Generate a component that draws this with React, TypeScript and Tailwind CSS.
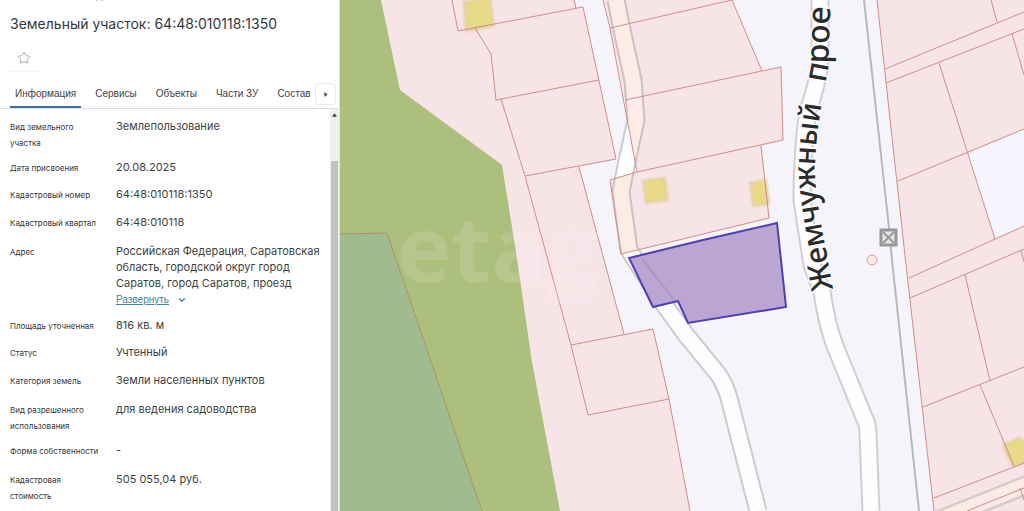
import React, { useState } from "react";
import { ChevronDown, Star } from "lucide-react";

interface Field {
  label: string;
  value: string;
  height: string;
  expandable?: boolean;
}

const TABS = ["Информация", "Сервисы", "Объекты", "Части ЗУ", "Состав"];

const FIELDS: Field[] = [
  { label: "Вид земельного участка", value: "Землепользование", height: "min-h-[41px]" },
  { label: "Дата присвоения", value: "20.08.2025", height: "min-h-[27px]" },
  { label: "Кадастровый номер", value: "64:48:010118:1350", height: "min-h-[28px]" },
  { label: "Кадастровый квартал", value: "64:48:010118", height: "min-h-[29px]" },
  {
    label: "Адрес",
    value:
      "Российская Федерация, Саратовская область, городской округ город Саратов, город Саратов, проезд",
    height: "min-h-[74px]",
    expandable: true,
  },
  { label: "Площадь уточненная", value: "816 кв. м", height: "min-h-[27px]" },
  { label: "Статус", value: "Учтенный", height: "min-h-[28px]" },
  { label: "Категория земель", value: "Земли населенных пунктов", height: "min-h-[29px]" },
  {
    label: "Вид разрешенного использования",
    value: "для ведения садоводства",
    height: "min-h-[41px]",
  },
  { label: "Форма собственности", value: "-", height: "min-h-[29px]" },
  { label: "Кадастровая стоимость", value: "505 055,04 руб.", height: "min-h-[41px]" },
];

const InfoPanel: React.FC = () => {
  const [activeTab, setActiveTab] = useState(TABS[0]);
  const [favorite, setFavorite] = useState(false);

  return (
    <aside className="flex w-[340px] shrink-0 flex-col overflow-hidden border-r border-[#e4e8c9] bg-white font-['Inter',sans-serif] text-[#3b3f45]">
      <header className="px-[10px]">
        <div className="flex h-[2px] items-end pl-[16px] text-[11px] leading-[14px] text-[#888]">
          <span>Объекты найдены</span>
        </div>
        <h1 className="mt-[14px] text-[14px] leading-4 font-normal text-[#35383c]">
          Земельный участок: 64:48:010118:1350
        </h1>
        <button
          type="button"
          aria-label="В избранное"
          aria-pressed={favorite}
          onClick={() => setFavorite(!favorite)}
          className="mt-3 flex h-7 w-7 items-center justify-center border-b border-gray-100 text-gray-400"
        >
          <Star className="h-[14px] w-[14px]" strokeWidth={1.5} />
        </button>
      </header>

      {/* Tabs */}
      <div className="mt-2 flex h-[29px] shrink-0 items-stretch border-b border-[#dcdfe8] pl-[10px]">
        <div
          role="tablist"
          className="flex min-w-0 flex-1 gap-[9px] overflow-hidden font-['Liberation_Sans',sans-serif] text-[10px]"
        >
          {TABS.map((tab) => (
            <button
              key={tab}
              type="button"
              role="tab"
              aria-selected={tab === activeTab}
              onClick={() => setActiveTab(tab)}
              className={`shrink-0 border-b-2 pl-[5px] last:pr-0 pr-[5px] ${
                tab === activeTab ? "border-[#3f7094]" : "border-transparent"
              }`}
            >
              {tab}
            </button>
          ))}
        </div>
        <button
          type="button"
          aria-label="Следующие вкладки"
          className="mr-[3px] flex h-[22px] w-[21px] shrink-0 items-center justify-center self-center rounded-sm border border-gray-200"
        >
          <svg viewBox="0 0 4 6" className="h-[5px] w-1 fill-gray-600">
            <path d="M0 0 4 3 0 6z" />
          </svg>
        </button>
      </div>

      <div className="flex min-h-0 flex-1">
        <dl className="min-w-0 flex-1 overflow-hidden pt-[9px] pl-[10px]">
          {FIELDS.map((field) => (
            <div key={field.label} className={`flex ${field.height}`}>
              <dt className="w-[106px] shrink-0 pt-px pr-3 text-[8px] leading-[16px] text-[#33363b]">
                {field.label}
              </dt>
              <dd className="flex-1 text-[11px] leading-[16px]">
                {field.value}
                {field.expandable && (
                  <a
                    href="#address"
                    className="flex items-center gap-2 font-['Liberation_Sans',sans-serif] text-[10px] leading-[18px] text-[#3f8299]"
                  >
                    <span className="underline">Развернуть</span>
                    <ChevronDown className="h-[10px] w-[10px]" strokeWidth={3} />
                  </a>
                )}
              </dd>
            </div>
          ))}
        </dl>
        <div className="flex w-[9px] shrink-0 flex-col items-center bg-[#f0f0f1]">
          <svg viewBox="0 0 6 4" className="mt-1 h-1 w-[5px] shrink-0 fill-gray-700">
            <path d="M0 4 3 0 6 4z" />
          </svg>
          <div className="mt-[44px] w-[7px] flex-1 bg-[#c1c1c3]" />
        </div>
      </div>
    </aside>
  );
};

const MIDDLE_PARCELS =
  "M603 0L610 28L625 100L637 172L610 180L621 254L769 218L761 146L783 140L781 67L762 71L732 0Z";
const LEFT_ROAD =
  "M616 0L622 30L633 80L636 120L626 166L621 192L629 250L663 303L686 335L718 374Q725 384 729 398L758 511";
const RIGHT_ROAD =
  "M820 0L820 60Q817 88 808 110Q802 150 802 200L812 265L822 292Q827 325 835 346L864 417Q868 424 868 434L871 511";

const CadastralMap: React.FC = () => (
  <svg
    viewBox="340 0 684 511"
    preserveAspectRatio="xMinYMin slice"
    className="block h-full w-full"
    role="img"
    aria-label="Кадастровая карта"
  >
    <defs>
      <clipPath id="middle-parcels">
        <path d={MIDDLE_PARCELS} />
      </clipPath>
      <path id="street-line" d="M833 289L826 250Q817 205 815 175Q815 145 821 108L828 70L833 -60" />
      <filter id="soft">
        <feGaussianBlur stdDeviation="0.8" />
      </filter>
    </defs>

    <rect x="340" width="684" height="511" fill="#f5f4fb" />

    {/* Roads */}
    <g fill="none">
      <path d={LEFT_ROAD} stroke="#cbcbcd" strokeWidth="19" />
      <path d={LEFT_ROAD} stroke="#fdfdfe" strokeWidth="15" />
      <path d={RIGHT_ROAD} stroke="#cfcfd1" strokeWidth="19" />
      <path d={RIGHT_ROAD} stroke="#fefefe" strokeWidth="15" />
    </g>

    {/* Western parcels and the green belt */}
    <path
      d="M381 0H574L576 8L583 7L616 159L579 167L624 334L653 329L669 399L690 511H550L500 250V165L400 90Z"
      fill="#f6e4e7"
    />
    <path d="M340 0H381L400 90L502 165L516 252L532 362L560 511H340Z" fill="#acbf7d" />
    <path d="M340 234L387 233L397 262L482 511H340Z" fill="#a0bb8e" />

    {/* Central parcels */}
    <path d={MIDDLE_PARCELS} fill="#f6e4e7" />
    <g clipPath="url(#middle-parcels)" fill="none">
      <path d={LEFT_ROAD} stroke="#cdc1bf" strokeWidth="19" />
      <path d={LEFT_ROAD} stroke="#fdece5" strokeWidth="15" />
    </g>

    {/* Eastern parcels */}
    <path d="M877 0H1024V511H934L905 256Z" fill="#f6e4e7" />
    <path d="M967 154L1024 129V226L995 239Z" fill="#f6f5fd" />
    <path d="M934 522L1034 482" stroke="#d6cbca" strokeWidth="20" />
    <path d="M934 522L1034 482" stroke="#faebe5" strokeWidth="15" />

    {/* Buildings */}
    <g fill="#e8da86" stroke="#e4cfa6" strokeWidth="2" filter="url(#soft)">
      <path d="M464 2L490 -3L494 26L466 31Z" />
      <path d="M643 181L665 178L668 200L646 203Z" />
      <path d="M750 183L766 180L769 204L753 206Z" />
      <path d="M1003 445L1019 438L1026 442V462L1012 466Z" />
    </g>

    {/* Parcel borders */}
    <g fill="none" stroke="#d08d88" strokeWidth="1">
      <path d="M452 0L458 31L583 7L616 159L525 176L501 99" />
      <path d="M475 28L491 54L496 100L599 80M574 0L576 8" />
      <path d="M525 176L571 345L588 415L669 399L653 329L571 345M669 399L690 511M579 167L624 334" />
      <path d="M603 0L610 28L637 172M610 28L732 0L762 71M625 100L781 67L783 140L637 172" />
      <path d="M637 172L610 180L621 254L769 218L761 146" />
      <path d="M877 0L905 256L934 511M885 69L1024 12M886 83L1024 29M991 0L997 22M1012 34L1024 75" />
      <path d="M939 63L995 239M898 181L1024 129M909 278L1024 226M910 298L1024 249M1021 250L1024 262" />
      <path d="M965 275L990 381M923 407L1024 367M980 385L1014 466M934 498L1024 463M967 511L1024 488M1020 488L1024 500" />
    </g>
    <path d="M340 234L387 233L397 262L482 511" fill="none" stroke="#ae9460" />

    {/* Power line */}
    <path d="M864 0L889 228L892 260L919 511" fill="none" stroke="#b8b8ba" strokeWidth="2" />
    <rect x="881" y="230" width="15" height="15" fill="#e6e6e6" stroke="#979797" strokeWidth="3" />
    <path d="M883 232L894 243M894 232L883 243" stroke="#999" strokeWidth="2" />
    <circle cx="872" cy="260" r="5" fill="#fae8e4" stroke="#d49b91" />

    {/* Selected parcel */}
    <path
      d="M629 258L703 240L716 237L777 223L786 307L688 323L678 301L653 307Z"
      fill="#bba5d3"
      stroke="#4e3fb5"
      strokeWidth="2"
    />
    <path d="M642 259L674 300" stroke="#a897c1" strokeWidth="2" />

    {/* Street name along the road */}
    <g
      className="font-['Noto_Sans',sans-serif]"
      fontWeight="500"
      fill="#2b2b2b"
      stroke="#fcfcfd"
      strokeWidth="3"
      paintOrder="stroke"
    >
      <text fontSize="30">
        <textPath href="#street-line">Жемчужный</textPath>
      </text>
      <text fontSize="32">
        <textPath href="#street-line" startOffset="208">
          прое
        </textPath>
      </text>
    </g>

    <text
      x="397"
      y="282"
      className="font-['Open_Sans',sans-serif]"
      fontSize="92"
      fontWeight="700"
      fill="#fff"
      fillOpacity="0.12"
    >
      etag
    </text>
  </svg>
);

export default function App() {
  return (
    <main className="flex h-screen overflow-hidden bg-white">
      <InfoPanel />
      <section className="min-w-0 flex-1">
        <CadastralMap />
      </section>
    </main>
  );
}
